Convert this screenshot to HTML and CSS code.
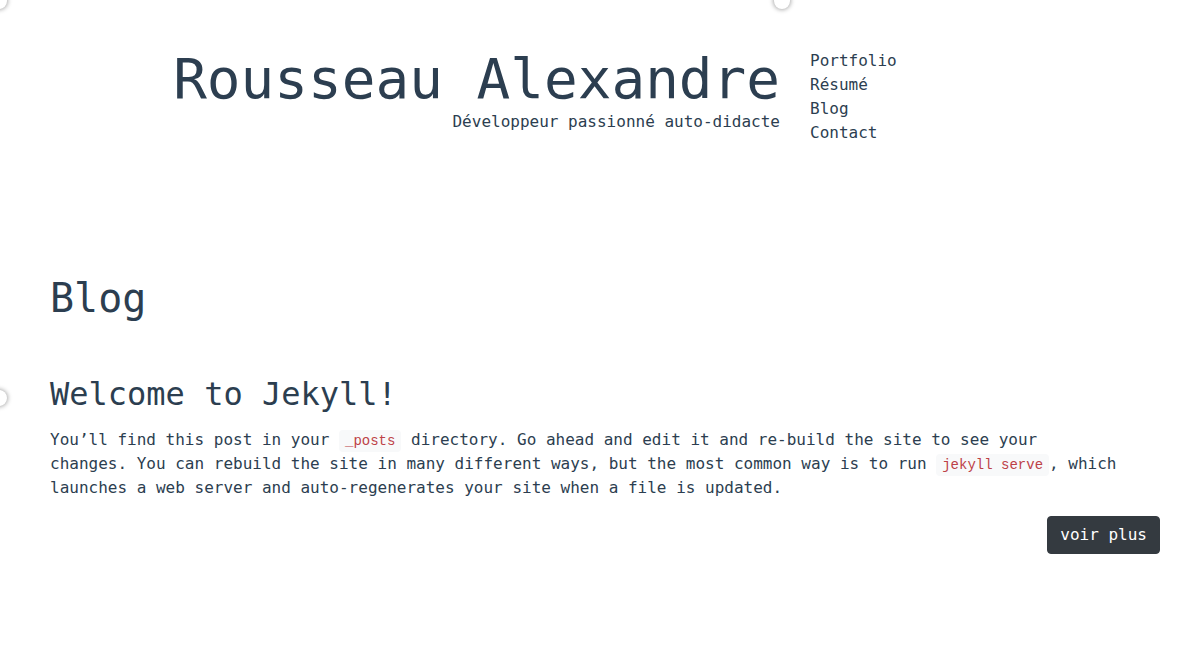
FILE: index.html
```html
<!DOCTYPE html>
<html lang="fr">
<head>
<meta charset="utf-8">
<meta name="viewport" content="width=device-width, initial-scale=1">
<title>Rousseau Alexandre</title>
<link rel="stylesheet" href="styles.css">
</head>
<body>
<span class="handle handle-left-top"></span>
<span class="handle handle-top"></span>
<span class="handle handle-left"></span>
<header class="site-header">
  <div class="brand">
    <h1 class="brand-name">Rousseau Alexandre</h1>
    <p class="brand-tagline">Développeur passionné auto-didacte</p>
  </div>
  <nav class="site-nav">
    <a href="#portfolio">Portfolio</a>
    <a href="#resume">Résumé</a>
    <a href="#blog">Blog</a>
    <a href="#contact">Contact</a>
  </nav>
</header>
<main class="content">
  <h1 class="page-title">Blog</h1>
  <article class="post">
    <h2 class="post-title">Welcome to Jekyll!</h2>
    <p class="post-text">You’ll find this post in your <code>_posts</code> directory. Go ahead and edit it and re-build the site to see your changes. You can rebuild the site in many different ways, but the most common way is to run <code>jekyll serve</code>, which launches a web server and auto-regenerates your site when a file is updated.</p>
    <a class="button" href="#post">voir plus</a>
  </article>
</main>
</body>
</html>
```

FILE: styles.css
```css
*, *::before, *::after { box-sizing: border-box; }

body {
  position: relative;
  margin: 0;
  min-height: 100vh;
  overflow-x: hidden;
  background: #fff;
  color: #2c3e50;
  font-family: "DejaVu Sans Mono", monospace;
  font-size: 16px;
  line-height: 24px;
}

h1, h2, p { margin: 0; font-weight: 400; }

.site-header {
  display: grid;
  grid-template-columns: 2fr 1fr;
  padding: 49px 27px 0 35px;
}

.brand { padding: 0 15px; text-align: right; }
.brand-name { margin-bottom: 1px; font-size: 56px; line-height: 60px; }

.site-nav {
  display: flex;
  flex-direction: column;
  align-items: flex-start;
  padding: 0 15px;
}

.site-nav a { color: inherit; text-decoration: none; }

.content { padding: 129px 42px 48px 50px; }
.page-title { font-size: 40px; line-height: 48px; }

.post {
  display: flex;
  flex-direction: column;
  padding-top: 53px;
}

.post-title { margin-bottom: 15px; font-size: 32px; line-height: 38px; }
.post-text { max-width: 1068px; margin-bottom: 16px; }

code {
  padding: 3px 6px;
  border-radius: 4px;
  background: #f8f9fa;
  color: #bd4147;
  font-family: "Liberation Mono", monospace;
  font-size: 14px;
  line-height: 16px;
}

.button {
  align-self: flex-end;
  padding: 6px 12px;
  border: 1px solid #343a40;
  border-radius: 4px;
  background: #343a40;
  color: #fff;
  text-decoration: none;
}

.handle {
  position: absolute;
  width: 16px;
  height: 16px;
  border-radius: 50%;
  background: #fff;
  box-shadow: 0 0 4px 1px #aaa;
}

.handle-left-top { left: -9px; top: -7px; }
.handle-top { left: 774px; top: -7px; }
.handle-left { left: -9px; top: 390px; }
```
